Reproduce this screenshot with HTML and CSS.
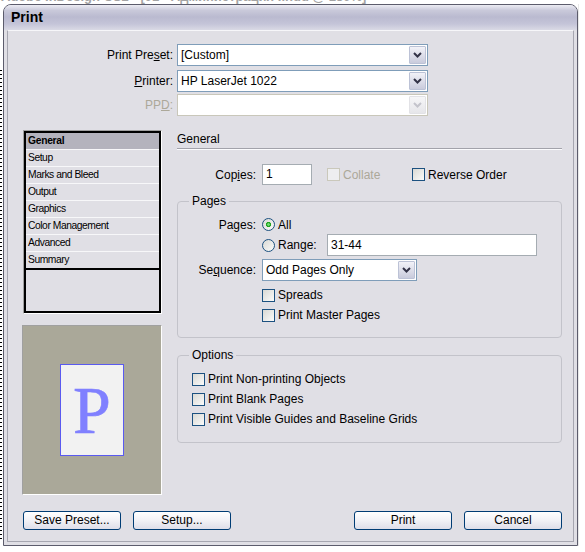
FILE: index.html
```html
<!DOCTYPE html>
<html>
<head>
<meta charset="utf-8">
<title>Print</title>
<link rel="stylesheet" href="styles.css">
</head>
<body>
<div class="desktop">
  <div class="apptitle"><span>Adobe InDesign CS2 - [01 - Администрация .indd @ 150%]</span></div>
  <div class="stage">
    <div class="lstrip"></div>
    <div class="window">
      <div class="titlebar">Print</div>
      <div class="frame">
        <div class="dlg">
          <div class="toprows">
            <div class="trow">
              <span class="tlabel">Print Pre<u>s</u>et:</span>
              <div class="select wide"><span class="val">[Custom]</span><span class="arrow"><svg width="9" height="6" viewBox="0 0 9 6"><path d="M1 1 L4.5 4.5 L8 1" fill="none" stroke="#333347" stroke-width="2"/></svg></span></div>
            </div>
            <div class="trow mt4">
              <span class="tlabel"><u>P</u>rinter:</span>
              <div class="select wide"><span class="val">HP LaserJet 1022</span><span class="arrow"><svg width="9" height="6" viewBox="0 0 9 6"><path d="M1 1 L4.5 4.5 L8 1" fill="none" stroke="#333347" stroke-width="2"/></svg></span></div>
            </div>
            <div class="trow mt2">
              <span class="tlabel dis">PP<u>D</u>:</span>
              <div class="select wide disabled"><span class="val"></span><span class="arrow"><svg width="9" height="6" viewBox="0 0 9 6"><path d="M1 1 L4.5 4.5 L8 1" fill="none" stroke="#c4c4cc" stroke-width="2"/></svg></span></div>
            </div>
          </div>

          <div class="main">
            <div class="leftcol">
              <div class="list">
                <div class="item sel">General</div>
                <div class="item">Setup</div>
                <div class="item">Marks and Bleed</div>
                <div class="item">Output</div>
                <div class="item">Graphics</div>
                <div class="item">Color Management</div>
                <div class="item">Advanced</div>
                <div class="item last">Summary</div>
              </div>
              <div class="preview"><div class="page">P</div></div>
            </div>

            <div class="rightcol">
              <div class="heading">General</div>
              <div class="copies">
                <span class="flabel">Cop<u>i</u>es:</span>
                <div class="input copiesin">1</div>
                <div class="chk dis collate"><span class="box"></span><span>Collate</span></div>
                <div class="chk"><span class="box"></span><span>Reverse Order</span></div>
              </div>

              <div class="group pages">
                <div class="gtitle">Pages</div>
                <div class="prow r1">
                  <span class="flabel narrow">Pages:</span>
                  <div class="chk"><span class="radio on"></span><span>All</span></div>
                </div>
                <div class="prow r2">
                  <div class="chk rangechk"><span class="radio"></span><span>Range:</span></div>
                  <div class="input rangein">31-44</div>
                </div>
                <div class="prow r3">
                  <span class="flabel narrow">Se<u>q</u>uence:</span>
                  <div class="select seq"><span class="val">Odd Pages Only</span><span class="arrow"><svg width="9" height="6" viewBox="0 0 9 6"><path d="M1 1 L4.5 4.5 L8 1" fill="none" stroke="#333347" stroke-width="2"/></svg></span></div>
                </div>
                <div class="prow r4 indent">
                  <div class="chk"><span class="box"></span><span>Spreads</span></div>
                </div>
                <div class="prow r5 indent">
                  <div class="chk"><span class="box"></span><span>Print Master Pages</span></div>
                </div>
              </div>

              <div class="group options">
                <div class="gtitle">Options</div>
                <div class="orow first"><div class="chk"><span class="box"></span><span>Print Non-printing Objects</span></div></div>
                <div class="orow"><div class="chk"><span class="box"></span><span>Print Blank Pages</span></div></div>
                <div class="orow"><div class="chk"><span class="box"></span><span>Print Visible Guides and Baseline Grids</span></div></div>
              </div>
            </div>
          </div>

          <div class="buttons">
            <button class="btn">Save Preset...</button>
            <button class="btn">Setup...</button>
            <button class="btn push">Print</button>
            <button class="btn">Cancel</button>
          </div>
        </div>
      </div>
    </div>
    <div class="rstrip"></div>
  </div>
</div>
</body>
</html>
```

FILE: styles.css
```css
* { box-sizing: border-box; }
html, body { margin: 0; padding: 0; }
body {
  background: #fff;
  font-family: "Liberation Sans", Arial, sans-serif;
  font-size: 12px;
  color: #000;
}
.desktop {
  width: 585px;
  height: 552px;
  overflow: hidden;
  background: #fff;
}
.apptitle { height: 4px; overflow: hidden; }
.apptitle span {
  display: block;
  margin-top: -10px;
  line-height: 14px;
  font-size: 13px;
  font-weight: bold;
  color: #a4a4a4;
  white-space: nowrap;
  padding-left: 1px;
}
.stage { display: flex; }
.lstrip {
  width: 3px;
  height: 542px;
  background: repeating-linear-gradient(to bottom, #000 0 1px, transparent 1px 4px) 0 66px / 2px 470px no-repeat;
}
.rstrip {
  flex: 1;
  height: 542px;
  border-left: 1px solid #e8e8e8;
}
.window {
  width: 575px;
  height: 542px;
  border: 1px solid #5c5c6c;
  border-radius: 8px 8px 0 0;
  background: #e0dfe5;
  overflow: hidden;
  display: flex;
  flex-direction: column;
}
.titlebar {
  flex: none;
  height: 25px;
  line-height: 25px;
  padding-left: 7px;
  font-size: 14px;
  font-weight: bold;
  background: linear-gradient(to bottom, #ececf3 0%, #c9c9da 22%, #babad0 48%, #c4c4d8 75%, #dadae5 100%);
}
.frame {
  flex: 1;
  display: flex;
  padding: 0 3px 3px;
}
.dlg {
  flex: 1;
  display: flex;
  flex-direction: column;
  border: 1px solid #a6a6b0;
  border-top-color: #f6f6f9;
  padding: 13px 10px 0 0;
}

/* top rows */
.trow { display: flex; align-items: center; height: 22px; gap: 4px; }
.mt4 { margin-top: 4px; }
.mt2 { margin-top: 2px; }
.tlabel { width: 165px; text-align: right; white-space: nowrap; }
.tlabel.dis { color: #aca899; }

.select {
  display: flex;
  height: 22px;
  border: 1px solid #7f9db9;
  background: #fff;
}
.select.wide { width: 251px; }
.select.disabled { border-color: #c9c7ba; }
.select .val {
  flex: 1;
  padding-left: 3px;
  line-height: 20px;
  white-space: nowrap;
  overflow: hidden;
}
.select .arrow {
  flex: none;
  width: 17px;
  margin: 1px;
  border: 1px solid #bcc2d6;
  border-radius: 1px;
  background: linear-gradient(to bottom, #f2f2f8, #c9cbdc);
  display: flex;
  align-items: center;
  justify-content: center;
}
.select.disabled .arrow {
  border-color: #e2e2e6;
  background: linear-gradient(to bottom, #f6f6f8, #e6e6ea);
}

/* main */
.main {
  display: grid;
  grid-template-columns: 140px 385px;
  column-gap: 15px;
  margin-top: 14px;
  padding-left: 14px;
}
.leftcol { display: flex; flex-direction: column; }
.list {
  margin-left: 1px;
  width: 139px;
  height: 184px;
  border: 1px solid;
  border-color: #a0a0a0 #fff #fff #a0a0a0;
  box-shadow: inset 0 0 0 2px #000;
  padding: 2px;
  display: flex;
  flex-direction: column;
  font-size: 10.3px;
  letter-spacing: -0.45px;
}
.item {
  height: 17px;
  line-height: 16px;
  padding-left: 2px;
  border-bottom: 1px solid #f7f7f9;
  white-space: nowrap;
}
.item.sel { background: #b4b3bd; font-weight: bold; letter-spacing: -0.3px; }
.item.last { height: 18px; border-bottom: 2px solid #000; }

.preview {
  margin-top: 11px;
  height: 170px;
  border: 1px solid;
  border-color: #a0a0a0 #fff #fff #a0a0a0;
  background: #aaa899;
  display: flex;
  align-items: center;
  justify-content: center;
}
.page {
  width: 64px;
  height: 92px;
  background: #f2f2f2;
  border: 1px solid #5a5af0;
  display: flex;
  align-items: center;
  justify-content: center;
  font-family: "Liberation Serif", "Times New Roman", serif;
  font-size: 68px;
  line-height: 1;
  color: #8080ff;
  -webkit-text-stroke: 0.6px #8080ff;
}

/* right column */
.heading {
  height: 19px;
  padding-top: 1px;
  line-height: 17px;
  border-bottom: 1px solid #a2a2aa;
  box-shadow: 0 1px 0 #fbfbfd;
}
.copies {
  display: flex;
  align-items: center;
  height: 21px;
  margin-top: 15px;
}
.flabel {
  flex: none;
  width: 79px;
  margin-right: 6px;
  text-align: right;
  white-space: nowrap;
}
.flabel.narrow { width: 78px; }
.input {
  height: 21px;
  border: 1px solid #a5acb2;
  background: #fff;
  padding-left: 3px;
  line-height: 19px;
  white-space: nowrap;
}
.copiesin { width: 50px; }
.chk { display: flex; align-items: center; gap: 3px; white-space: nowrap; }
.box {
  flex: none;
  width: 13px;
  height: 13px;
  border: 1px solid #1c5180;
  background: linear-gradient(135deg, #d9d9d4, #fbfbfa);
}
.chk.dis { color: #aca899; }
.chk.dis .box { border-color: #cac8bb; background: #eeeef0; }
.collate { margin-left: 15px; width: 85px; }
.radio {
  flex: none;
  width: 13px;
  height: 13px;
  border-radius: 50%;
  border: 1px solid #1c5180;
  background: linear-gradient(135deg, #d9d9d4, #fbfbfa);
}
.radio.on {
  background:
    radial-gradient(circle at 50% 50%, #6fdc6f 0 1px, #22a322 1.6px 2.4px, transparent 2.9px),
    linear-gradient(135deg, #d9d9d4, #fbfbfa);
}

.group {
  border: 1px solid #c3c3ca;
  border-radius: 4px;
}
.group.pages { margin-top: 16px; padding-bottom: 12px; }
.group.options { margin-top: 17px; padding-bottom: 13px; }
.gtitle {
  display: table;
  margin: -8px 0 0 11px;
  padding: 0 3px;
  line-height: 15px;
  background: #e0dfe5;
}
.prow { display: flex; align-items: center; }
.prow.r1 { margin-top: 6px; height: 19px; }
.prow.r2 { height: 22px; padding-left: 84px; }
.prow.r3 { margin-top: 3px; height: 22px; }
.prow.r4 { margin-top: 4px; height: 20px; }
.prow.r5 { height: 20px; }
.prow.indent { padding-left: 84px; }
.rangechk { width: 65px; flex: none; }
.rangein { width: 210px; height: 22px; line-height: 20px; }
.select.seq { width: 155px; }

.orow { display: flex; align-items: center; height: 20px; padding-left: 14px; }
.orow.first { margin-top: 6px; }

/* buttons */
.buttons {
  display: flex;
  gap: 12px;
  margin-top: 16px;
  padding-left: 15px;
  padding-right: 1px;
}
.btn {
  width: 98px;
  height: 19px;
  padding: 0;
  border: 1px solid #003c74;
  border-radius: 3px;
  background: linear-gradient(to bottom, #ffffff 0%, #f3f3f7 45%, #dedee9 100%);
  font-family: inherit;
  font-size: 12px;
  line-height: 17px;
  color: #000;
  text-align: center;
}
.btn.push { margin-left: auto; }
```
